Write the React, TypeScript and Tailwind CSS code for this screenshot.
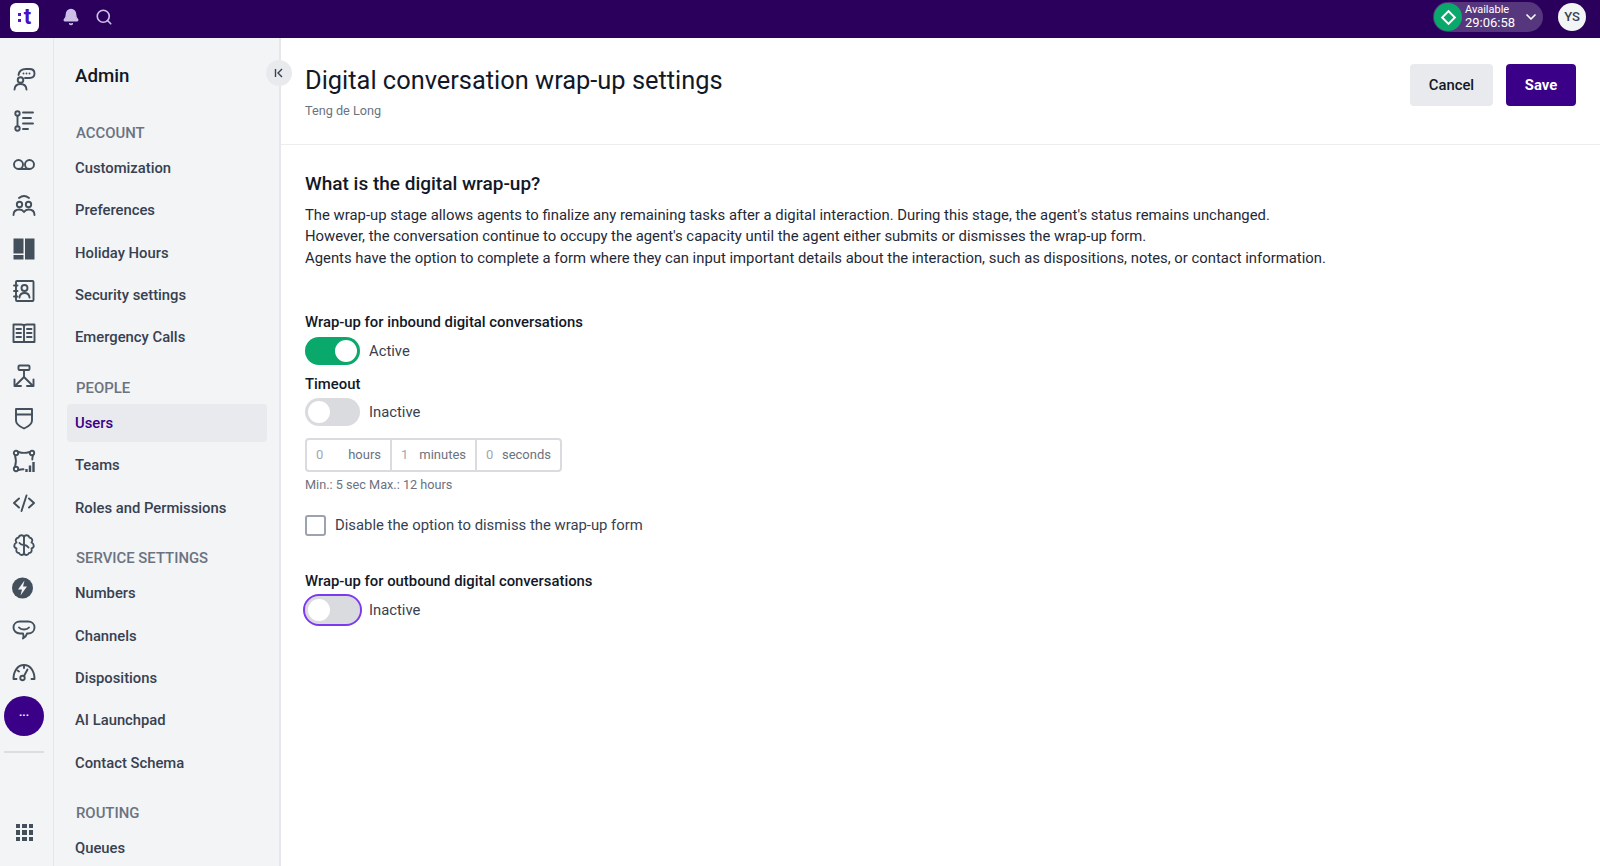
import React from 'react';
import { Bell, Search, ChevronDown } from 'lucide-react';

const sections = [
  { title: 'ACCOUNT', items: ['Customization', 'Preferences', 'Holiday Hours', 'Security settings', 'Emergency Calls'] },
  { title: 'PEOPLE', items: ['Users', 'Teams', 'Roles and Permissions'] },
  { title: 'SERVICE SETTINGS', items: ['Numbers', 'Channels', 'Dispositions', 'AI Launchpad', 'Contact Schema'] },
  { title: 'ROUTING', items: ['Queues'] },
];

const railIcons: React.ReactNode[] = [
  <>
    <circle cx="8.500" cy="13" r="2.800" />
    <path d="M2.500 22.500c.3-3.500 2.800-5.500 6-5.500s5.700 2 6 5.500" />
    <path d="M6.500 8C7 4.500 9.500 2 14 2h3.500C20.500 2 22.500 3.800 22.500 6.500S20.500 11 17.500 11h-4.500" />
    <path d="M11.500 6.500h.01M14.500 6.500h.01M17.500 6.500h.01" />
  </>,
  <>
    <circle cx="5.500" cy="4.500" r="2.200" />
    <circle cx="5.500" cy="19.500" r="2.200" />
    <path d="M5.500 6.700v10.600" />
    <path d="M11 3.500h10M11 9h8M11 14.500h10M11 20h5" />
  </>,
  <>
    <circle cx="6.500" cy="12.500" r="4.500" />
    <circle cx="17.500" cy="12.500" r="4.500" />
    <path d="M6.500 17h11" />
  </>,
  <>
    <path d="M7 4c3-2.500 7-2.500 10 0" />
    <circle cx="7.500" cy="10.500" r="2.700" />
    <circle cx="16.500" cy="10.500" r="2.700" />
    <path d="M1.500 21c0-3.500 2.500-5.500 6-5.500 2 0 3.500 1 4.500 2.500 1-1.500 2.500-2.500 4.500-2.500 3.500 0 6 2 6 5.500" />
  </>,
  <g fill="#434f5b" stroke="none">
    <rect x="1.500" y="1.500" width="10" height="15" />
    <rect x="1.500" y="18" width="10" height="4.500" />
    <rect x="13" y="1.500" width="9.500" height="21" />
  </g>,
  <>
    <rect x="4" y="2" width="17.500" height="20" rx="1" />
    <circle cx="12.500" cy="9" r="3" />
    <path d="M7.500 18.500c.3-3 2.500-4.500 5-4.500s4.700 1.500 5 4.500" />
    <path d="M2 6.500h3.500M2 12h3.500M2 17.500h3.500" />
  </>,
  <>
    <path d="M12 5v16H1.500V3.500H9C10.500 3.500 12 4 12 5zM12 5c0-1 1.500-1.500 3-1.500h7.500V21H12" />
    <path d="M4.500 8h4.500M4.500 12h4.500M4.500 16h4.500M15 8h4.500M15 12h4.500M15 16h4.500" />
  </>,
  <>
    <rect x="6.500" y="1.500" width="11" height="4.500" rx="1" />
    <path d="M12 6v7L3.500 21.500M12 13l8.500 8.500" />
    <path d="M2.500 15.500v6.500h6.500M21.500 15.500v6.500h-6.500" />
  </>,
  <>
    <path d="M4 3h16v11.500c0 3.500-3.500 6-8 8-4.500-2-8-4.500-8-8z" />
    <path d="M4 8.500h16" />
  </>,
  <>
    <circle cx="4" cy="4" r="2.200" />
    <circle cx="20" cy="4" r="2.200" />
    <circle cx="4" cy="20" r="2.200" />
    <path d="M6.500 3c3 1 8 1 11 0M3 6.500c1 3 1 8 0 11M21 6.500c-.5 1-.7 2.500-.7 4M6.500 21c1.500-.5 3-.7 5-.7" />
    <path d="M14.500 23v-3M18 23v-6.500M21.500 23v-10" strokeWidth="2.400" strokeLinecap="butt" />
  </>,
  <>
    <path d="M7 7.500L2 12l5 4.500M17 7.500l5 4.500-5 4.500M14.500 4.500L9.500 20" />
  </>,
  <>
    <path d="M12 4C11 1.500 7.500 1.500 6.500 4.500 3.500 5 3 8 4.500 9.500 1.500 11 1.500 14.500 4.500 15.500c-1 2.500.5 4.500 2.500 4.500 1 2.500 4 2.500 5 .5" />
    <path d="M12 4c1-2.500 4.500-2.500 5.500.5 3 .5 3.500 3.500 2 5 3 1.500 3 5 0 6 1 2.500-.5 4.500-2.500 4.500-1 2.500-4 2.500-5 .5" />
    <path d="M12 4v16.500M7.500 10c1 1.500 3 2 4.500 2M16.500 14.500c-1-1.500-3-2.500-4.500-2.500" />
  </>,
  <>
    <circle cx="10.500" cy="12" r="10.500" fill="#434f5b" stroke="none" />
    <path d="M12.500 4.500L6 13.500h4L8.500 19.500l6.500-9h-4z" fill="#f3f4f6" stroke="none" />
  </>,
  <>
    <path d="M8 3.500h8c3.700 0 6.500 2.500 6.500 6s-2.800 6-6.500 6h-1c-.5 2-2 4-4 5 .7-1.500.7-3.500 0-5H8c-3.700 0-6.500-2.500-6.500-6s2.800-6 6.500-6z" />
    <path d="M7 9.500c2.200 2.700 7.800 2.700 10 0" />
  </>,
  <>
    <path d="M4.500 19H1.500C1.500 10.500 6 5 12 5s10.500 5.500 10.500 14h-3" />
    <circle cx="10.500" cy="18" r="2.200" />
    <path d="M12 16l3.500-6.500M12 5.500v2.500M5.500 10.500l1.500 1" />
  </>,
];

function Section({ title, items }: { title: string; items: string[] }) {
  return (
    <div className="mb-[17px]">
      <div className="mb-[1.500px] h-[29px] pl-[9px] text-[14.900px] font-medium leading-[29px] text-[#6b7280]">{title}</div>
      {items.map((item) => (
        <div
          key={item}
          className={`mb-[4.400px] flex h-[38px] items-center rounded-[4px] pl-[8px] text-[14.800px] font-medium ${
            item === 'Users' ? 'bg-[#e9eaed] text-[#3a0088]' : 'text-[#374151]'
          }`}
        >
          {item}
        </div>
      ))}
    </div>
  );
}

function Toggle({ on, focused, label }: { on?: boolean; focused?: boolean; label: string }) {
  return (
    <div className="flex h-[28px] items-center">
      <div
        className={`flex h-[28px] w-[55px] items-center rounded-full px-[3px] ${on ? 'justify-end bg-[#0aa86b]' : 'bg-[#d9dbde]'} ${
          focused ? 'outline-2 outline-[#7c3aed]' : ''
        }`}
      >
        <div className="h-[22px] w-[22px] rounded-full bg-white" />
      </div>
      <span className="ml-[9px] text-[14.800px] text-[#374151]">{label}</span>
    </div>
  );
}

function TimeCell({ value, unit, width }: { value: string; unit: string; width: string }) {
  return (
    <div className={`flex h-full items-center justify-between border-r-2 border-[#d9dbde] pl-[9px] pr-[9px] text-[13px] text-[#6b7280] last:border-r-0 ${width}`}>
      <span className="text-[#a1a7af]">{value}</span>
      <span>{unit}</span>
    </div>
  );
}

export default function App() {
  return (
    <div className="flex h-[866px] w-[1600px] flex-col overflow-hidden bg-white font-['Roboto',sans-serif] text-[#111827]">
      <header className="flex h-[38px] shrink-0 items-center bg-[#2b005c] pb-[4px]">
        <div className="ml-[10px] flex h-[29px] w-[29px] items-center justify-center rounded-[6px] bg-white">
          <div className="mr-[3px] flex flex-col gap-[3px]">
            <div className="h-[3px] w-[3px] bg-[#5a14c8]" />
            <div className="h-[3px] w-[3px] bg-[#5a14c8]" />
          </div>
          <span className="text-[22px] font-bold leading-none text-[#4a0fc0]">t</span>
        </div>
        <Bell className="ml-[23px] h-[18px] w-[18px]" fill="#cdbfe8" stroke="#cdbfe8" />
        <Search className="ml-[15px] h-[18px] w-[18px]" stroke="#cdbfe8" strokeWidth={2.200} />
        <div className="ml-auto flex h-[30px] w-[110px] items-center rounded-full bg-[#56377e]">
          <div className="ml-[1px] flex h-[28px] w-[28px] items-center justify-center rounded-full bg-[#0aa86b]">
            <div className="h-[11px] w-[11px] rotate-45 border-2 border-white" />
          </div>
          <div className="ml-[3px] flex flex-col text-white">
            <span className="text-[11px] leading-[12px]">Available</span>
            <span className="text-[13px] leading-[14px]">29:06:58</span>
          </div>
          <ChevronDown className="ml-[8px] h-[16px] w-[16px]" stroke="#ffffff" strokeWidth={2.500} />
        </div>
        <div className="ml-[15px] mr-[14px] flex h-[28px] w-[28px] items-center justify-center rounded-full bg-[#f3f4f6] text-[13px] font-medium text-[#374151]">
          YS
        </div>
      </header>

      <div className="flex min-h-0 flex-1">
        <nav className="flex w-[54px] shrink-0 flex-col items-center border-r border-[#e5e7eb] bg-[#f3f4f6] pr-[5px] pt-[29px]">
          {railIcons.map((icon, i) => (
            <div key={i} className="mb-[18.400px] flex h-[24px] w-[24px] items-center justify-center">
              <svg width="24" height="24" viewBox="0 0 24 24" fill="none" stroke="#434f5b" strokeWidth="1.900" strokeLinecap="round" strokeLinejoin="round">
                {icon}
              </svg>
            </div>
          ))}
          <div className="-mt-[7px] flex h-[40px] w-[40px] shrink-0 items-center justify-center rounded-full bg-[#3a0088] text-[11px] font-bold leading-none text-white">
            ···
          </div>
          <div className="mt-[15px] h-[2px] w-[40px] shrink-0 bg-[#dcdee1]" />
          <div className="mt-[71px] ml-[1px] grid shrink-0 grid-cols-3 gap-[2px]">
            {Array.from({ length: 9 }).map((_, i) => (
              <div key={i} className="h-[4.500px] w-[4.500px] bg-[#434f5b]" />
            ))}
          </div>
        </nav>

        <aside className="relative w-[227px] shrink-0 border-r-2 border-[#e5e7eb] bg-[#f3f4f6] pl-[13px] pr-[12px]">
          <div className="h-[81px] pl-[8px] pt-[26px] text-[18.700px] font-medium leading-[24px] text-[#111827]">Admin</div>
          <div className="-mt-[0.500px]">
            {sections.map((s) => (
              <Section key={s.title} title={s.title} items={s.items} />
            ))}
          </div>
          <div className="absolute right-[-13px] top-[22px] flex h-[26px] w-[26px] items-center justify-center rounded-full bg-[#e9eaed]">
            <svg width="12" height="12" viewBox="0 0 12 12" fill="none" stroke="#374151" strokeWidth="1.400">
              <path d="M2.500 2v8M9 2L5 6l4 4" />
            </svg>
          </div>
        </aside>

        <main className="min-w-0 flex-1">
          <div className="flex h-[107px] items-start justify-between border-b border-[#eceded] pl-[24px] pr-[24px]">
            <div>
              <h1 className="mt-[26px] text-[25.400px] leading-[32px] text-[#111827]">Digital conversation wrap-up settings</h1>
              <div className="mt-[5px] text-[12.700px] text-[#6b7280]">Teng de Long</div>
            </div>
            <div className="mt-[26px] flex gap-[13px]">
              <button className="h-[42px] w-[83px] rounded-[4px] bg-[#e9eaed] text-[14.800px] font-medium text-[#111827]">Cancel</button>
              <button className="h-[42px] w-[70px] rounded-[4px] bg-[#3a0088] text-[14.800px] font-bold text-white">Save</button>
            </div>
          </div>

          <div className="pl-[24px] pt-[27px]">
            <h2 className="text-[19px] font-medium leading-[24px] text-[#111827]">What is the digital wrap-up?</h2>
            <p className="mt-[9px] text-[14.850px] leading-[21.300px] text-[#1f2937]">
              The wrap-up stage allows agents to finalize any remaining tasks after a digital interaction. During this stage, the agent's status remains unchanged.
              <br />
              However, the conversation continue to occupy the agent's capacity until the agent either submits or dismisses the wrap-up form.
              <br />
              Agents have the option to complete a form where they can input important details about the interaction, such as dispositions, notes, or contact information.
            </p>

            <div className="mt-[43px] text-[14.850px] font-medium leading-[20px]">Wrap-up for inbound digital conversations</div>
            <div className="mt-[5px]"><Toggle on label="Active" /></div>
            <div className="mt-[9px] text-[14.850px] font-medium leading-[20px]">Timeout</div>
            <div className="mt-[4px]"><Toggle label="Inactive" /></div>
            <div className="mt-[12px] flex h-[34px] w-[257px] rounded-[4px] border-2 border-[#d9dbde]">
              <TimeCell value="0" unit="hours" width="w-[85px]" />
              <TimeCell value="1" unit="minutes" width="w-[85px]" />
              <TimeCell value="0" unit="seconds" width="flex-1" />
            </div>
            <div className="mt-[5px] text-[12.700px] leading-[16px] text-[#6b7280]">Min.: 5 sec Max.: 12 hours</div>
            <div className="mt-[21px] flex items-center">
              <div className="h-[21px] w-[21px] rounded-[3px] border-2 border-[#9ca3af] bg-white" />
              <span className="ml-[9px] text-[14.850px] text-[#374151]">Disable the option to dismiss the wrap-up form</span>
            </div>
            <div className="mt-[35px] text-[14.850px] font-medium leading-[20px]">Wrap-up for outbound digital conversations</div>
            <div className="mt-[5px]"><Toggle focused label="Inactive" /></div>
          </div>
        </main>
      </div>
    </div>
  );
}
